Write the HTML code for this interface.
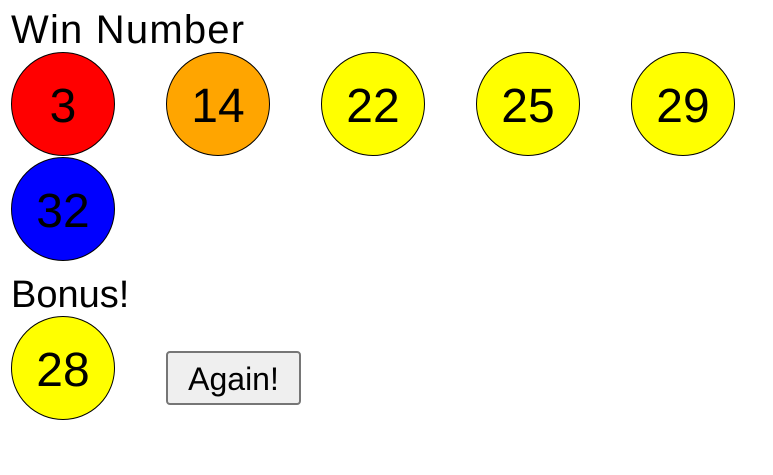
<!DOCTYPE html>
<html><head><style>
body{margin:0;background:#fff;font-family:"Liberation Sans",sans-serif;}
.t{position:absolute;left:11px;font-size:40px;line-height:40px;color:#000;}
.b{position:absolute;width:102px;height:102px;border:1.5px solid #000;border-radius:50%;font-size:48px;line-height:107px;text-align:center;color:#000;}
.btn{position:absolute;left:166px;top:351px;width:131px;height:50px;background:#efefef;border:2px solid #767676;border-radius:4px;font-size:32px;line-height:52px;text-align:center;}
</style></head><body>
<div class="t" style="top:10px;letter-spacing:1.2px">Win Number</div>
<div class="b" style="left:11px;top:52px;background:#f00">3</div>
<div class="b" style="left:166px;top:52px;background:#ffa500">14</div>
<div class="b" style="left:321px;top:52px;background:#ff0">22</div>
<div class="b" style="left:476px;top:52px;background:#ff0">25</div>
<div class="b" style="left:631px;top:52px;background:#ff0">29</div>
<div class="b" style="left:11px;top:157px;background:#00f">32</div>
<div class="t" style="top:275px;font-size:38px">Bonus!</div>
<div class="b" style="left:11px;top:316px;background:#ff0">28</div>
<div class="btn">Again!</div>
</body></html>
